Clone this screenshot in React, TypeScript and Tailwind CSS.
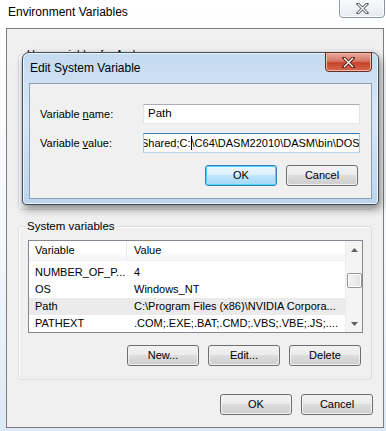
import React from 'react';

const font = { fontFamily: '"Liberation Sans", Arial, sans-serif' };

const WinButton: React.FC<{ label: React.ReactNode; focused?: boolean }> = ({ label, focused }) => (
  <div
    className={`w-[72px] h-[21px] rounded-[3px] border p-px ${
      focused ? 'border-[#3c7fb1] shadow-[inset_0_0_0_1px_#48d5fd]' : 'border-[#707070]'
    }`}
  >
    <div
      className={`h-full rounded-[2px] flex items-center justify-center text-[11px] text-black ${
        focused
          ? 'bg-[linear-gradient(#eaf6fd_0%,#d9f0fc_50%,#bee6fd_50%,#a7d9f5_100%)]'
          : 'bg-[linear-gradient(#f2f2f2_0%,#ebebeb_50%,#dddddd_50%,#cfcfcf_100%)]'
      }`}
    >
      {label}
    </div>
  </div>
);

const rows = [
  { name: 'NUMBER_OF_P...', value: '4' },
  { name: 'OS', value: 'Windows_NT' },
  { name: 'Path', value: 'C:\\Program Files (x86)\\NVIDIA Corpora...', sel: true },
  { name: 'PATHEXT', value: '.COM;.EXE;.BAT;.CMD;.VBS;.VBE;.JS;....' },
];

export default function App() {
  return (
    <div style={font} className="relative w-[386px] h-[431px] overflow-hidden bg-[linear-gradient(180deg,#ffffff_0%,#f4f7fb_60%,#dbe9f6_100%)]">
      {/* outer window title bar */}
      <div className="h-[28px] flex items-start pl-[8px] pt-[5px]">
        <span className="text-[12px] leading-[15px] text-black [text-shadow:0_0_6px_#ffffff]">Environment Variables</span>
      </div>
      <div className="absolute left-[339px] top-[-3px] w-[46px] h-[21px] rounded-[4px] border border-[#8a94a2] bg-[linear-gradient(#fafbfd,#e6ebf2)] shadow-[inset_0_0_0_1px_#ffffff] flex items-center justify-center">
        <svg width="13" height="11" viewBox="0 0 13 11" className="mt-[2px]">
          <path d="M2 1 L11 10 M11 1 L2 10" stroke="#4c5562" strokeWidth="3" strokeLinecap="square" />
          <path d="M2 1 L11 10 M11 1 L2 10" stroke="#ffffff" strokeWidth="1.2" />
        </svg>
      </div>

      {/* outer client */}
      <div className="ml-[6px] w-[378px] h-[400px] border border-[#7c7c7c] bg-[#f0f0f0] flex flex-col">
        <div className="relative mt-[25px] mx-[11px] h-[156px] rounded-[3px] border border-[#d5dfe5] shadow-[inset_1px_1px_0_#ffffff]">
          <span className="absolute left-[6px] top-[-8px] px-[2px] bg-[#f0f0f0] text-[11px] leading-[14px] text-black">User variables for Andrew</span>
        </div>
        <div className="relative mt-[16px] mx-[11px] h-[154px] rounded-[3px] border border-[#d5dfe5] shadow-[inset_1px_1px_0_#ffffff]">
          <span className="absolute left-[6px] top-[-8px] px-[2px] bg-[#f0f0f0] text-[11.5px] leading-[14px] text-black">System variables</span>
          <div className="mt-[13px] ml-[9px] w-[335px] h-[93px] border border-[#828790] bg-white flex">
            <div className="flex-1 flex flex-col">
              <div className="h-[21px] flex text-[11px] text-black bg-[linear-gradient(#ffffff_0%,#ffffff_55%,#f3f4f6_100%)] border-b border-[#eef0f3]">
                <div className="w-[98px] pl-[6px] flex items-center border-r border-[#e3e8ee]">Variable</div>
                <div className="flex-1 pl-[7px] flex items-center">Value</div>
              </div>
              <div className="pt-[3px] flex flex-col">
                {rows.map((r) => (
                  <div key={r.name} className={`h-[17px] flex items-center text-[11px] text-black ${r.sel ? 'bg-[#ebebeb]' : ''}`}>
                    <div className="w-[98px] pl-[6px] whitespace-nowrap overflow-hidden">{r.name}</div>
                    <div className="flex-1 pl-[7px] whitespace-nowrap overflow-hidden">{r.value}</div>
                  </div>
                ))}
              </div>
            </div>
            {/* scrollbar */}
            <div className="w-[17px] bg-[#f4f4f4] border-l border-[#ececec] flex flex-col items-center">
              <div className="h-[17px] flex items-center justify-center">
                <svg width="7" height="4" viewBox="0 0 7 4"><path d="M0 4 L3.5 0 L7 4 Z" fill="#606060" /></svg>
              </div>
              <div className="mt-[15px] w-[15px] h-[15px] rounded-[2px] border border-[#969696] bg-[linear-gradient(90deg,#f3f3f3,#e2e2e2)] shadow-[inset_0_0_0_1px_#ffffff]" />
              <div className="flex-1" />
              <div className="h-[17px] flex items-center justify-center">
                <svg width="7" height="4" viewBox="0 0 7 4"><path d="M0 0 L3.5 4 L7 0 Z" fill="#606060" /></svg>
              </div>
            </div>
          </div>
          <div className="mt-[12px] mr-[10px] flex justify-end gap-[9px]">
            <WinButton label="New..." />
            <WinButton label="Edit..." />
            <WinButton label="Delete" />
          </div>
        </div>
        <div className="mt-[14px] mr-[10px] flex justify-end gap-[9px]">
          <WinButton label="OK" />
          <WinButton label="Cancel" />
        </div>
      </div>

      {/* Edit System Variable dialog */}
      <div className="absolute left-[22px] top-[52px] w-[357px] h-[153px] rounded-t-[7px] rounded-b-[4px] border border-[#3c4a5a] bg-[linear-gradient(180deg,#c4daf0_0%,#d8e7f5_40%,#bcd4ec_100%)] shadow-[2px_4px_8px_rgba(0,0,0,0.45),inset_0_0_0_1px_#eef5fc] flex flex-col">
        <div className="h-[30px] flex items-start pl-[7px] pt-[8px]">
          <span className="text-[12px] leading-[15px] text-black">Edit System Variable</span>
        </div>
        <div className="absolute right-[6px] top-[-1px] w-[47px] h-[20px] rounded-b-[4px] border border-[#6b2a22] bg-[linear-gradient(#e9a99c_0%,#d77766_45%,#c7412a_55%,#d56a4e_100%)] shadow-[inset_0_0_0_1px_#f1b9a9] flex items-center justify-center">
          <svg width="13" height="11" viewBox="0 0 13 11">
            <path d="M2 1 L11 10 M11 1 L2 10" stroke="#5a2217" strokeWidth="3.2" strokeLinecap="square" />
            <path d="M2 1 L11 10 M11 1 L2 10" stroke="#ffffff" strokeWidth="1.4" />
          </svg>
        </div>
        <div className="mx-[6px] h-[116px] border border-[#8b9fb5] bg-[#f0f0f0] flex flex-col pl-[10px] pt-[20px]">
          <div className="flex items-center h-[20px] text-[11px] text-black">
            <span className="w-[103px]">Variable <span className="underline">n</span>ame:</span>
            <div className="w-[217px] h-[20px] border border-[#abadb3] border-x-[#e2e3ea] border-b-[#e3e9ef] bg-white flex items-center pl-[4px] text-[11.5px]">Path</div>
          </div>
          <div className="mt-[9px] flex items-center h-[20px] text-[11px] text-black">
            <span className="w-[103px]">Variable <span className="underline">v</span>alue:</span>
            <div className="w-[217px] h-[20px] border border-[#3d7bad] border-x-[#a4c9e3] border-b-[#b7d9ed] bg-white flex items-center overflow-hidden text-[11px] whitespace-nowrap">
              <span className="-ml-[3px]">Shared;C:</span>
              <span className="w-px h-[14px] bg-black shrink-0" />
              <span>\C64\DASM22010\DASM\bin\DOS\</span>
            </div>
          </div>
          <div className="mt-[12px] mr-[13px] flex justify-end gap-[9px]">
            <WinButton label="OK" focused />
            <WinButton label="Cancel" />
          </div>
        </div>
      </div>
    </div>
  );
}
